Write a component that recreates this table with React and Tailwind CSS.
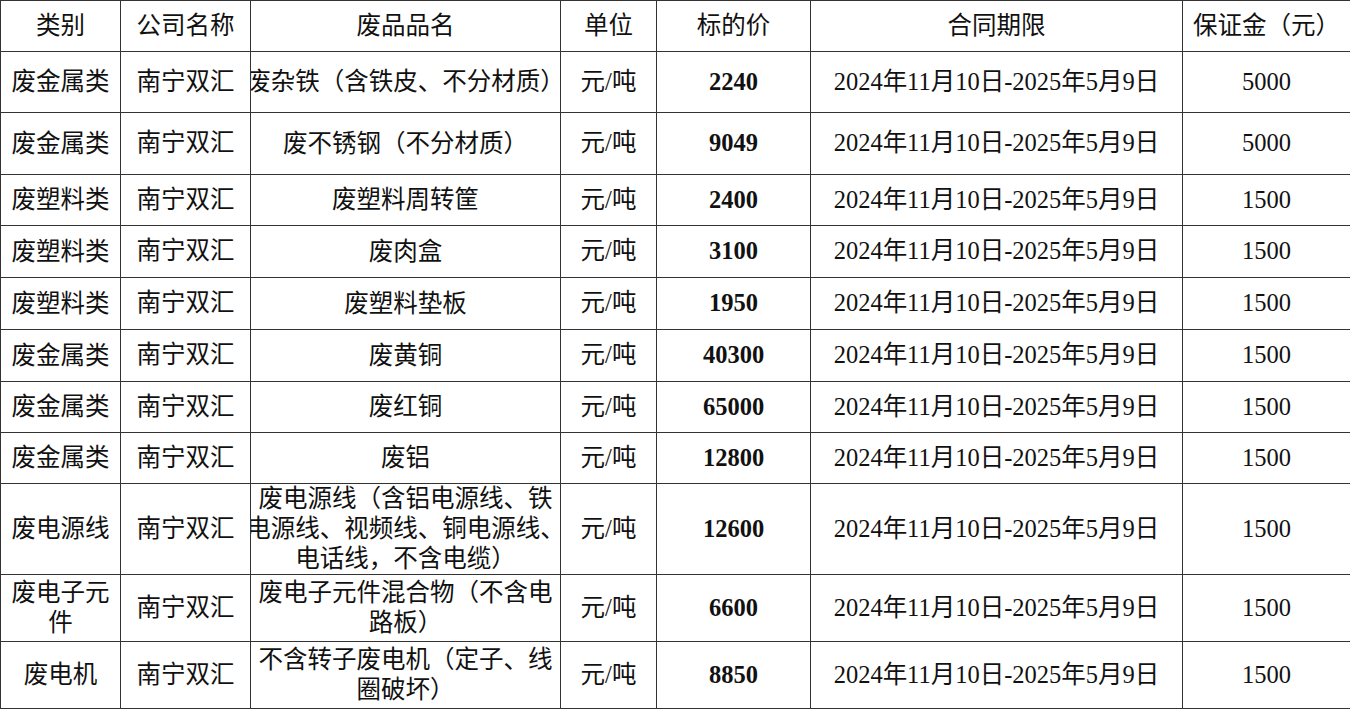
const rows = [
  { h: "h-[61px]", cat: ["废金属类"], name: ["废杂铁（含铁皮、不分材质）"], price: "2240", dep: "5000" },
  { h: "h-[62px]", cat: ["废金属类"], name: ["废不锈钢（不分材质）"], price: "9049", dep: "5000" },
  { h: "h-[51px]", cat: ["废塑料类"], name: ["废塑料周转筐"], price: "2400", dep: "1500" },
  { h: "h-[52px]", cat: ["废塑料类"], name: ["废肉盒"], price: "3100", dep: "1500" },
  { h: "h-[52px]", cat: ["废塑料类"], name: ["废塑料垫板"], price: "1950", dep: "1500" },
  { h: "h-[52px]", cat: ["废金属类"], name: ["废黄铜"], price: "40300", dep: "1500" },
  { h: "h-[51px]", cat: ["废金属类"], name: ["废红铜"], price: "65000", dep: "1500" },
  { h: "h-[51px]", cat: ["废金属类"], name: ["废铝"], price: "12800", dep: "1500" },
  {
    h: "h-[91px]",
    cat: ["废电源线"],
    name: ["废电源线（含铝电源线、铁", "电源线、视频线、铜电源线、", "电话线，不含电缆）"],
    price: "12600",
    dep: "1500",
  },
  { h: "h-[67px]", cat: ["废电子元", "件"], name: ["废电子元件混合物（不含电", "路板）"], price: "6600", dep: "1500" },
  { h: "h-[67px]", cat: ["废电机"], name: ["不含转子废电机（定子、线", "圈破坏）"], price: "8850", dep: "1500" },
];

const cell = "border border-[#333] text-center align-middle p-0 overflow-hidden whitespace-nowrap";

const Lines = ({ items }) => (
  <div className="leading-[30px]">
    {items.map((t) => (
      <div key={t} className="flex justify-center">
        <span>{t}</span>
      </div>
    ))}
  </div>
);

const App = () => {
  return (
    <div
      className="bg-white w-[1350px] h-[720px] overflow-hidden text-[#111] text-[24.5px]"
      style={{ fontFamily: '"Liberation Serif", "Noto Sans CJK SC", serif' }}
    >
      <table className="table-fixed border-collapse w-[1350px]">
        <colgroup>
          <col className="w-[120px]" />
          <col className="w-[130px]" />
          <col className="w-[310px]" />
          <col className="w-[96px]" />
          <col className="w-[154px]" />
          <col className="w-[372px]" />
          <col className="w-[168px]" />
        </colgroup>
        <thead>
          <tr className="h-[51px]">
            <th className={cell + " font-normal"}>类别</th>
            <th className={cell + " font-normal"}>公司名称</th>
            <th className={cell + " font-normal"}>废品品名</th>
            <th className={cell + " font-normal"}>单位</th>
            <th className={cell + " font-normal"}>标的价</th>
            <th className={cell + " font-normal"}>合同期限</th>
            <th className={cell + " font-normal"}>保证金（元）</th>
          </tr>
        </thead>
        <tbody>
          {rows.map((r, i) => (
            <tr key={i} className={r.h}>
              <td className={cell}>
                <Lines items={r.cat} />
              </td>
              <td className={cell}>南宁双汇</td>
              <td className={cell}>
                <Lines items={r.name} />
              </td>
              <td className={cell}>元/吨</td>
              <td className={cell + " font-bold"}>{r.price}</td>
              <td className={cell}>2024年11月10日-2025年5月9日</td>
              <td className={cell}>{r.dep}</td>
            </tr>
          ))}
        </tbody>
      </table>
    </div>
  );
};

export default App;
